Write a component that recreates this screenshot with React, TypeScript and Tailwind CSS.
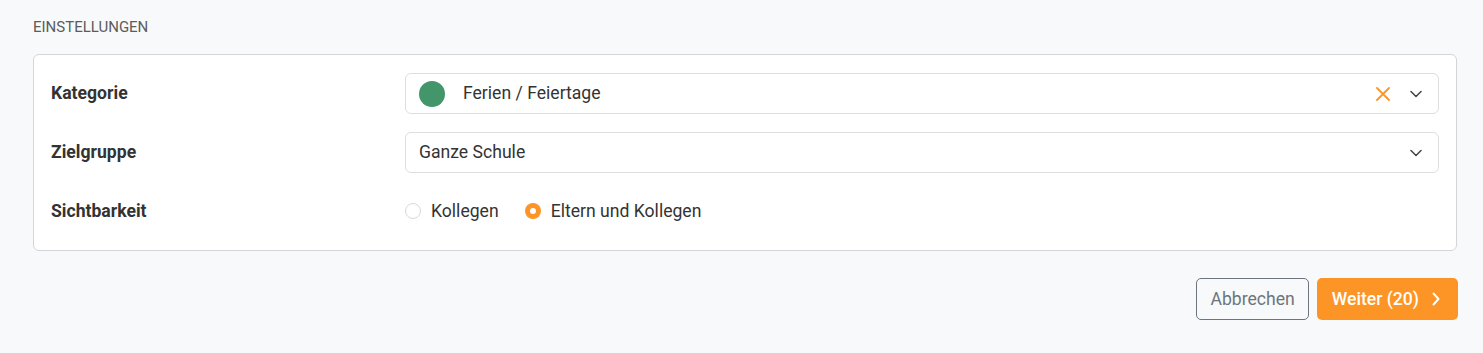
import React from 'react';

const Chevron: React.FC<{ className?: string }> = ({ className }) => (
  <svg viewBox="0 0 12 8" className={className} fill="none" stroke="currentColor" strokeWidth="1.5" strokeLinecap="round" strokeLinejoin="round" aria-hidden="true">
    <path d="M1 1.5 L6 6.5 L11 1.5" />
  </svg>
);

const Cross: React.FC<{ className?: string }> = ({ className }) => (
  <svg viewBox="0 0 14 14" className={className} fill="none" stroke="currentColor" strokeWidth="1.8" strokeLinecap="round" aria-hidden="true">
    <path d="M1 1 L13 13 M13 1 L1 13" />
  </svg>
);

const Row: React.FC<{ label: string; children: React.ReactNode }> = ({ label, children }) => (
  <div className="flex items-center h-[41px]">
    <div className="w-[354px] shrink-0 text-[17.6px] font-bold text-[#333]">{label}</div>
    <div className="flex-1 min-w-0">{children}</div>
  </div>
);

const Radio: React.FC<{ checked?: boolean; label: string }> = ({ checked, label }) => (
  <label className="flex items-center gap-[10px] cursor-pointer">
    {checked ? (
      <span className="w-4 h-4 rounded-full bg-[#fd9426] flex items-center justify-center">
        <span className="w-[6px] h-[6px] rounded-full bg-white" />
      </span>
    ) : (
      <span className="w-4 h-4 rounded-full border border-[#d9d9d9] bg-white" />
    )}
    <span className="text-[17.6px] text-[#333]">{label}</span>
  </label>
);

export default function App() {
  return (
    <div className="min-h-screen bg-[#f8f9fa] pl-[33px] pr-[26px] pt-[17px] pb-[33px] font-['Roboto','Liberation_Sans',sans-serif]">
      <div className="text-[15px] uppercase text-[#5c5c5c] leading-[20px] mb-[17px]">Einstellungen</div>

      <div className="bg-white border border-[#d5d5d5] rounded-[6px] px-[17px] pt-[18px] pb-[18px] flex flex-col gap-[18px]">
        <Row label="Kategorie">
          <div className="h-[41px] border border-[#dedede] rounded-[6px] flex items-center pl-[13px] pr-[16px]">
            <span className="w-[26px] h-[26px] rounded-full bg-[#43956a] shrink-0" />
            <span className="ml-[18px] text-[17.6px] text-[#333] flex-1">Ferien / Feiertage</span>
            <Cross className="w-[14px] h-[14px] text-[#fd9426]" />
            <Chevron className="ml-[20px] w-[12px] h-[8px] text-[#444]" />
          </div>
        </Row>
        <Row label="Zielgruppe">
          <div className="h-[41px] border border-[#dedede] rounded-[6px] flex items-center pl-[13px] pr-[16px]">
            <span className="text-[17.6px] text-[#333] flex-1">Ganze Schule</span>
            <Chevron className="w-[12px] h-[8px] text-[#444]" />
          </div>
        </Row>
        <Row label="Sichtbarkeit">
          <div className="flex items-center gap-[26px]">
            <Radio label="Kollegen" />
            <Radio checked label="Eltern und Kollegen" />
          </div>
        </Row>
      </div>

      <div className="flex justify-end gap-2 mt-[27px] -mr-[1px]">
        <button className="h-[42px] px-[13px] rounded-[5px] border border-[#6c757d] bg-transparent text-[17.6px] text-[#6c757d]">
          Abbrechen
        </button>
        <button className="h-[42px] pl-[15px] pr-[18px] rounded-[5px] bg-[#fd9426] text-white text-[17.6px] font-medium flex items-center gap-[13px]">
          Weiter (20)
          <svg viewBox="0 0 8 14" className="w-[8px] h-[14px]" fill="none" stroke="currentColor" strokeWidth="2" strokeLinecap="round" strokeLinejoin="round" aria-hidden="true">
            <path d="M1.5 1.5 L6.5 7 L1.5 12.5" />
          </svg>
        </button>
      </div>
    </div>
  );
}
